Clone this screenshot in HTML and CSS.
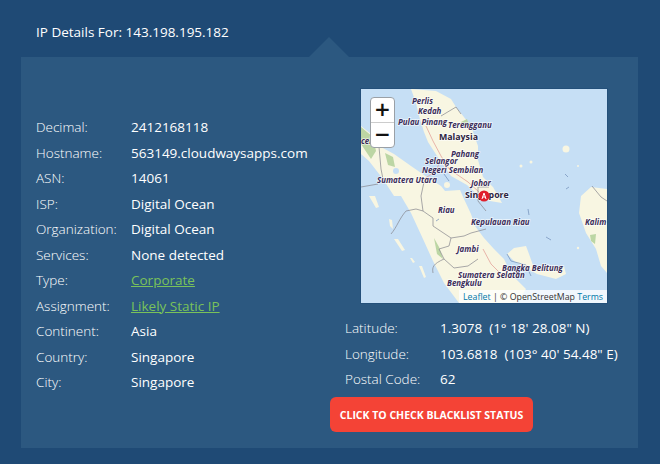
FILE: index.html
```html
<!DOCTYPE html>
<html lang="en">
<head>
	<meta charset="UTF-8">
	<title>IP Details</title>
	<link rel="stylesheet" href="styles.css">
</head>
<body>
	<h1 class="ip-title">IP Details For: 143.198.195.182</h1>
	<div class="ip-panel">
		<div class="ip-left">
			<div class="ip-row"><span class="ip-label">Decimal:</span><span class="ip-value">2412168118</span></div>
			<div class="ip-row"><span class="ip-label">Hostname:</span><span class="ip-value">563149.cloudwaysapps.com</span></div>
			<div class="ip-row"><span class="ip-label">ASN:</span><span class="ip-value">14061</span></div>
			<div class="ip-row"><span class="ip-label">ISP:</span><span class="ip-value">Digital Ocean</span></div>
			<div class="ip-row"><span class="ip-label">Organization:</span><span class="ip-value">Digital Ocean</span></div>
			<div class="ip-row"><span class="ip-label">Services:</span><span class="ip-value">None detected</span></div>
			<div class="ip-row"><span class="ip-label">Type:</span><a class="ip-link" href="#">Corporate</a></div>
			<div class="ip-row"><span class="ip-label">Assignment:</span><a class="ip-link" href="#">Likely Static IP</a></div>
			<div class="ip-row"><span class="ip-label">Continent:</span><span class="ip-value">Asia</span></div>
			<div class="ip-row"><span class="ip-label">Country:</span><span class="ip-value">Singapore</span></div>
			<div class="ip-row"><span class="ip-label">City:</span><span class="ip-value">Singapore</span></div>
		</div>
		<div class="ip-right">
			<div class="map">
				<svg class="map-svg" viewBox="0 0 246 214" width="246" height="214">
					<rect class="sea" width="246" height="214"/>
					<!-- land -->
					<path class="land" d="M50 0L75 2L90 10L95 18L110 37L117 57L117 71L122 88L132 98L141 114L129 112L119 108L106 96L90 87L78 70L67 53L63 43L58 27L55 14Z"/>
					<path class="land" d="M0 37L10 45L20 58L33 65L50 77L63 86L80 97L84 102L99 101L103 110L110 125L114 137L123 149L133 160L143 170L150 185L165 200L156 214L98 214L83 194L72 172L62 150L50 124L40 107L33 107L22 90L8 72L0 65Z"/>
					<path class="land" d="M146 165L153 159L165 157L168 165L173 179L203 177L205 185L195 190L176 185L165 179L153 172Z"/>
					<path class="land" d="M246 100L230 98L220 107L218 124L225 144L235 160L240 177L246 184Z"/>
					<path class="land" d="M8 107L14 107L18 118L15 119ZM33 150L37 150L44 161L41 162ZM49 169L51 169L54 173L52 174ZM58 177L61 177L65 188L63 189ZM28 130L31 131L32 140L29 137Z"/>
					<circle class="land" cx="205" cy="60" r="3.5"/>
					<circle class="land" cx="170" cy="73" r="1.5"/>
					<circle class="land" cx="160" cy="77" r="1.5"/>
					<circle class="land" cx="217" cy="77" r="1"/>
					<circle class="land" cx="86" cy="96" r="3"/>
					<circle class="land" cx="217" cy="159" r="1.2"/>
					<circle class="sea" cx="35" cy="82" r="3"/>
					<!-- green -->
					<path class="park" d="M0 38L12 48L15 62L10 70L0 55ZM24 64L32 68L34 78L27 76ZM73 149L78 158L82 170L76 165Z"/>
					<path class="park" d="M100 33L106 30L108 36L102 38ZM229 146L235 145L234 155L230 152Z"/>
					<!-- roads -->
					<path class="road" d="M65 37L72 52L80 67L88 80L107 93L118 103M122 160L130 175L140 185M80 70L75 82L60 92"/>
					<!-- borders -->
					<path class="border" d="M18 58L20 80L22 90M0 98L17 95M30 145C36 138 38 130 45 122L55 120L62 122L72 129L72 137L90 149L103 147L110 144L125 140M90 149L88 157L78 160L83 170L93 179L107 177L117 170M72 184C71 178 72 175 83 170M80 27L95 18L100 25M62 122L60 107L63 93M117 98L128 98M117 98L117 112L125 122M231 97L240 108L246 112"/>
					<path class="water" d="M146 165L150 172L165 176L170 187M83 85L88 92M185 148L190 151M75 132L78 130M167 120L168 126M205 100L208 98M204 85L207 88"/>
					<!-- labels -->
					<text class="place" x="51" y="15">Perlis</text>
					<text class="place" x="57" y="25">Kedah</text>
					<text class="place" x="37" y="36">Pulau Pinang</text>
					<text class="place" x="87" y="39">Terengganu</text>
					<text class="country" x="78" y="51">Malaysia</text>
					<text class="place" x="90" y="68">Pahang</text>
					<text class="place" x="64" y="75">Selangor</text>
					<text class="place" x="61" y="84">Negeri Sembilan</text>
					<text class="place" x="16" y="94">Sumatera Utara</text>
					<text class="place" x="110" y="97">Johor</text>
					<text class="place" x="0" y="55">cel</text>
					<text class="country" x="104" y="109">Singapore</text>
					<text class="place" x="77" y="124">Riau</text>
					<text class="place" x="110" y="136">Kepulauan Riau</text>
					<text class="place" x="224" y="136">Kalim</text>
					<text class="place" x="96" y="163">Jambi</text>
					<text class="place" x="141" y="182">Bangka Belitung</text>
					<text class="place" x="97" y="189">Sumatera Selatan</text>
					<text class="place" x="86" y="197">Bengkulu</text>
					<!-- marker -->
					<circle class="pin" cx="123" cy="107" r="5.5"/>
					<path class="pin-glyph" d="M121 110L123 104L125 110M121.5 108H124.5"/>
				</svg>
				<div class="zoom-ctl">
					<a class="zoom-btn zoom-in" href="#">+</a>
					<a class="zoom-btn" href="#">−</a>
				</div>
				<div class="attrib"><a href="#">Leaflet</a> | © OpenStreetMap <a href="#">Terms</a></div>
			</div>
			<div class="ip-geo">
				<div class="ip-row"><span class="ip-label">Latitude:</span><span class="ip-value">1.3078&nbsp; (1° 18' 28.08" N)</span></div>
				<div class="ip-row"><span class="ip-label">Longitude:</span><span class="ip-value">103.6818&nbsp; (103° 40' 54.48" E)</span></div>
				<div class="ip-row"><span class="ip-label">Postal Code:</span><span class="ip-value">62</span></div>
			</div>
			<a class="blacklist-btn" href="#">Click to Check Blacklist Status</a>
		</div>
	</div>
</body>
</html>
```

FILE: styles.css
```css
html, body {
  margin: 0;
  height: 100%;
}

body {
  background: #1f4a75;
  font-family: "Open Sans", sans-serif;
  font-size: 13.5px;
  color: #fff;
  overflow: hidden;
}

.ip-title {
  margin: 0;
  padding: 22px 0 0 36px;
  height: 57px;
  box-sizing: border-box;
  font-size: 13.5px;
  line-height: 20px;
  font-weight: 400;
}

.ip-panel {
  display: flex;
  position: relative;
  width: 617px;
  height: 391px;
  margin-left: 21px;
  box-sizing: border-box;
  padding-top: 32px;
  background: #2c5880;
}
.ip-panel::before {
  content: "";
  position: absolute;
  left: 288px;
  top: -20px;
  border: 20px solid transparent;
  border-top: 0;
  border-bottom-color: #2c5880;
}

.ip-left {
  width: 309px;
  padding: 26px 0 0 15px;
  box-sizing: border-box;
}

.ip-row {
  display: flex;
  height: 25.5px;
  line-height: 25.5px;
  white-space: nowrap;
}

.ip-label {
  width: 95px;
  flex: none;
  font-weight: 300;
  color: #fff;
}

.ip-value {
  font-weight: 400;
}

.ip-link {
  color: #7ac25a;
  text-decoration: underline;
}

.ip-geo {
  margin: 13px 0 4px 15px;
}

.map {
  position: relative;
  width: 246px;
  height: 214px;
  margin-left: 31px;
  overflow: hidden;
  outline: 1px solid #24507a;
}

.map-svg {
  display: block;
}

.sea { fill: #c6dff5; }
.land { fill: #f8f6e2; }
.park { fill: #bcd6a4; }
.road { fill: none; stroke: #e3a39a; stroke-width: 0.8; }
.border { fill: none; stroke: #85858c; stroke-width: 0.7; }
.water { fill: none; stroke: #6f8cb8; stroke-width: 0.7; }

.place,
.country {
  font-family: "Open Sans", sans-serif;
  fill: #3a2c58;
  stroke: rgba(255, 255, 255, 0.7);
  stroke-width: 1.5px;
  paint-order: stroke;
}
.place {
  font-size: 7.9px;
  font-weight: 700;
  font-style: italic;
}
.country {
  font-size: 8.8px;
  font-weight: 700;
  fill: #2e2440;
}

.pin { fill: #e0202c; }
.pin-glyph { fill: none; stroke: #fff; stroke-width: 1; }

.zoom-ctl {
  position: absolute;
  left: 9px;
  top: 8px;
  width: 25px;
  box-sizing: border-box;
  border: 1px solid #9aa0a6;
  border-radius: 4px;
  background: #fff;
}

.zoom-btn {
  display: block;
  height: 24px;
  line-height: 22px;
  text-align: center;
  font-family: "DejaVu Sans", sans-serif;
  font-size: 20px;
  font-weight: 700;
  color: #111;
  text-decoration: none;
}
.zoom-in {
  border-bottom: 1px solid #ccc;
}

.attrib {
  position: absolute;
  right: 0;
  bottom: 0;
  height: 13px;
  padding: 0 4px 0 4px;
  background: rgba(255, 255, 255, 0.75);
  font-size: 8.8px;
  line-height: 14px;
  color: #333;
  white-space: nowrap;
}
.attrib a {
  color: #0078a8;
  text-decoration: none;
}

.blacklist-btn {
  display: block;
  width: 203px;
  height: 35px;
  border-radius: 6px;
  background: #f44336;
  text-align: center;
  line-height: 36px;
  font-size: 10.5px;
  font-weight: 700;
  color: #fff;
  text-decoration: none;
  text-transform: uppercase;
  white-space: nowrap;
}
```
